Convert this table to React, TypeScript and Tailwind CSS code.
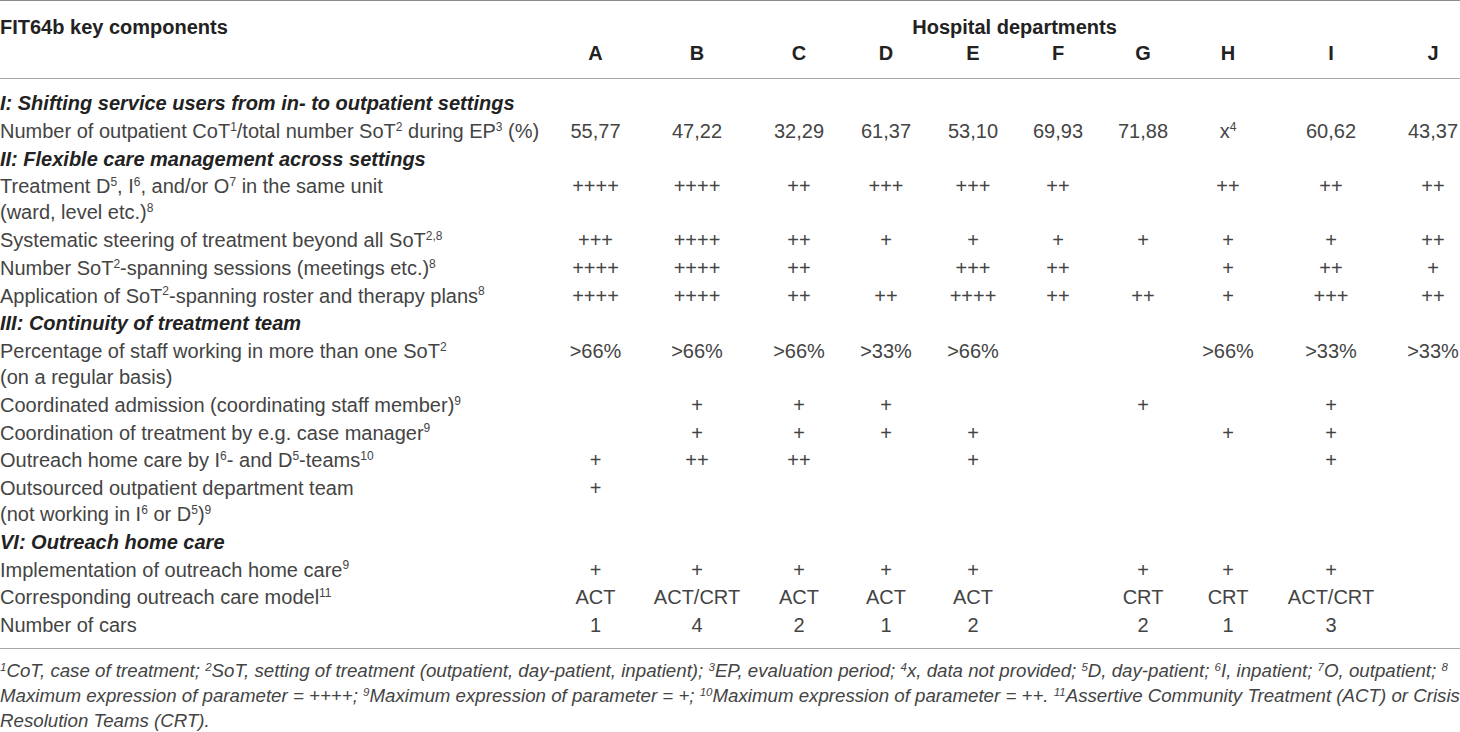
import React from 'react';

type Cell = React.ReactNode;

const colPad = ['', '', 'pl-2', '', '', '', '', 'pr-[10px]', '', 'pl-[24px]'];
const letters = ['A', 'B', 'C', 'D', 'E', 'F', 'G', 'H', 'I', 'J'];

const S: React.FC<{ children: React.ReactNode }> = ({ children }) => (
  <sup className="text-[12px] top-[-0.6em]">{children}</sup>
);

type Row =
  | { kind: 'section'; title: string }
  | { kind: 'data'; label: React.ReactNode; values: Cell[] };

const rows: Row[] = [
  { kind: 'section', title: 'I: Shifting service users from in- to outpatient settings' },
  {
    kind: 'data',
    label: (
      <>
        Number of outpatient CoT<S>1</S>/total number SoT<S>2</S> during EP<S>3</S> (%)
      </>
    ),
    values: ['55,77', '47,22', '32,29', '61,37', '53,10', '69,93', '71,88', <>x<S>4</S></>, '60,62', '43,37'],
  },
  { kind: 'section', title: 'II: Flexible care management across settings' },
  {
    kind: 'data',
    label: (
      <>
        Treatment D<S>5</S>, I<S>6</S>, and/or O<S>7</S> in the same unit
        <br />
        (ward, level etc.)<S>8</S>
      </>
    ),
    values: ['++++', '++++', '++', '+++', '+++', '++', '', '++', '++', '++'],
  },
  {
    kind: 'data',
    label: (
      <>
        Systematic steering of treatment beyond all SoT<S>2,8</S>
      </>
    ),
    values: ['+++', '++++', '++', '+', '+', '+', '+', '+', '+', '++'],
  },
  {
    kind: 'data',
    label: (
      <>
        Number SoT<S>2</S>-spanning sessions (meetings etc.)<S>8</S>
      </>
    ),
    values: ['++++', '++++', '++', '', '+++', '++', '', '+', '++', '+'],
  },
  {
    kind: 'data',
    label: (
      <>
        Application of SoT<S>2</S>-spanning roster and therapy plans<S>8</S>
      </>
    ),
    values: ['++++', '++++', '++', '++', '++++', '++', '++', '+', '+++', '++'],
  },
  { kind: 'section', title: 'III: Continuity of treatment team' },
  {
    kind: 'data',
    label: (
      <>
        Percentage of staff working in more than one SoT<S>2</S>
        <br />
        (on a regular basis)
      </>
    ),
    values: ['>66%', '>66%', '>66%', '>33%', '>66%', '', '', '>66%', '>33%', '>33%'],
  },
  {
    kind: 'data',
    label: (
      <>
        Coordinated admission (coordinating staff member)<S>9</S>
      </>
    ),
    values: ['', '+', '+', '+', '', '', '+', '', '+', ''],
  },
  {
    kind: 'data',
    label: (
      <>
        Coordination of treatment by e.g. case manager<S>9</S>
      </>
    ),
    values: ['', '+', '+', '+', '+', '', '', '+', '+', ''],
  },
  {
    kind: 'data',
    label: (
      <>
        Outreach home care by I<S>6</S>- and D<S>5</S>-teams<S>10</S>
      </>
    ),
    values: ['+', '++', '++', '', '+', '', '', '', '+', ''],
  },
  {
    kind: 'data',
    label: (
      <>
        Outsourced outpatient department team
        <br />
        (not working in I<S>6</S> or D<S>5</S>)<S>9</S>
      </>
    ),
    values: ['+', '', '', '', '', '', '', '', '', ''],
  },
  { kind: 'section', title: 'VI: Outreach home care' },
  {
    kind: 'data',
    label: (
      <>
        Implementation of outreach home care<S>9</S>
      </>
    ),
    values: ['+', '+', '+', '+', '+', '', '+', '+', '+', ''],
  },
  {
    kind: 'data',
    label: (
      <>
        Corresponding outreach care model<S>11</S>
      </>
    ),
    values: ['ACT', 'ACT/CRT', 'ACT', 'ACT', 'ACT', '', 'CRT', 'CRT', 'ACT/CRT', ''],
  },
  {
    kind: 'data',
    label: 'Number of cars',
    values: ['1', '4', '2', '1', '2', '', '2', '1', '3', ''],
  },
];

const F: React.FC<{ children: React.ReactNode }> = ({ children }) => (
  <sup className="text-[11.5px] leading-[0] top-[-0.55em]">{children}</sup>
);

export default function App() {
  return (
    <div className="w-[1460px] h-[732px] overflow-hidden bg-white font-['Liberation_Sans',Arial,sans-serif] text-[20px] leading-[26px] text-[#444]">
      <table className="w-full table-fixed border-collapse border-t border-[#8c8c8c]">
        <colgroup>
          <col className="w-[545px]" />
          <col className="w-[101px]" />
          <col className="w-[102px]" />
          <col className="w-[94px]" />
          <col className="w-[88px]" />
          <col className="w-[86px]" />
          <col className="w-[84px]" />
          <col className="w-[86px]" />
          <col className="w-[94px]" />
          <col className="w-[102px]" />
          <col className="w-[78px]" />
        </colgroup>
        <thead className="border-b border-[#a8a8a8] font-bold text-[#222]">
          <tr>
            <th className="pt-[13px] text-left align-top font-bold">FIT64b key components</th>
            <th colSpan={10} className="pt-[13px] pl-[24px] text-center font-bold">
              Hospital departments
            </th>
          </tr>
          <tr>
            <th className="pb-[12px]" />
            {letters.map((l, i) => (
              <th key={l} className={`pb-[12px] text-center font-bold ${colPad[i]}`}>
                {l}
              </th>
            ))}
          </tr>
        </thead>
        <tbody className="border-b border-[#a8a8a8]">
          {rows.map((r, ri) => {
            const first = ri === 0;
            const last = ri === rows.length - 1;
            const pad = first ? 'pt-[11px] pb-[0.875px]' : last ? 'pt-[0.875px] pb-[10px]' : 'py-[0.875px]';
            if (r.kind === 'section') {
              return (
                <tr key={ri}>
                  <td colSpan={11} className={`${pad} whitespace-nowrap font-bold italic text-[#222]`}>
                    {r.title}
                  </td>
                </tr>
              );
            }
            return (
              <tr key={ri}>
                <td className={`${pad} align-top whitespace-nowrap`}>{r.label}</td>
                {r.values.map((v, i) => (
                  <td key={i} className={`${pad} align-top text-center whitespace-nowrap ${colPad[i]}`}>
                    {v}
                  </td>
                ))}
              </tr>
            );
          })}
        </tbody>
      </table>
      <div className="pt-[9px] text-[18.7px] leading-[25px] italic whitespace-nowrap text-[#444]">
        <div>
          <F>1</F>CoT, case of treatment; <F>2</F>SoT, setting of treatment (outpatient, day-patient, inpatient); <F>3</F>EP,
          evaluation period; <F>4</F>x, data not provided; <F>5</F>D, day-patient; <F>6</F>I, inpatient; <F>7</F>O,
          outpatient; <F>8</F>
        </div>
        <div>
          Maximum expression of parameter = ++++; <F>9</F>Maximum expression of parameter = +; <F>10</F>Maximum expression
          of parameter = ++. <F>11</F>Assertive Community Treatment (ACT) or Crisis
        </div>
        <div>Resolution Teams (CRT).</div>
      </div>
    </div>
  );
}
